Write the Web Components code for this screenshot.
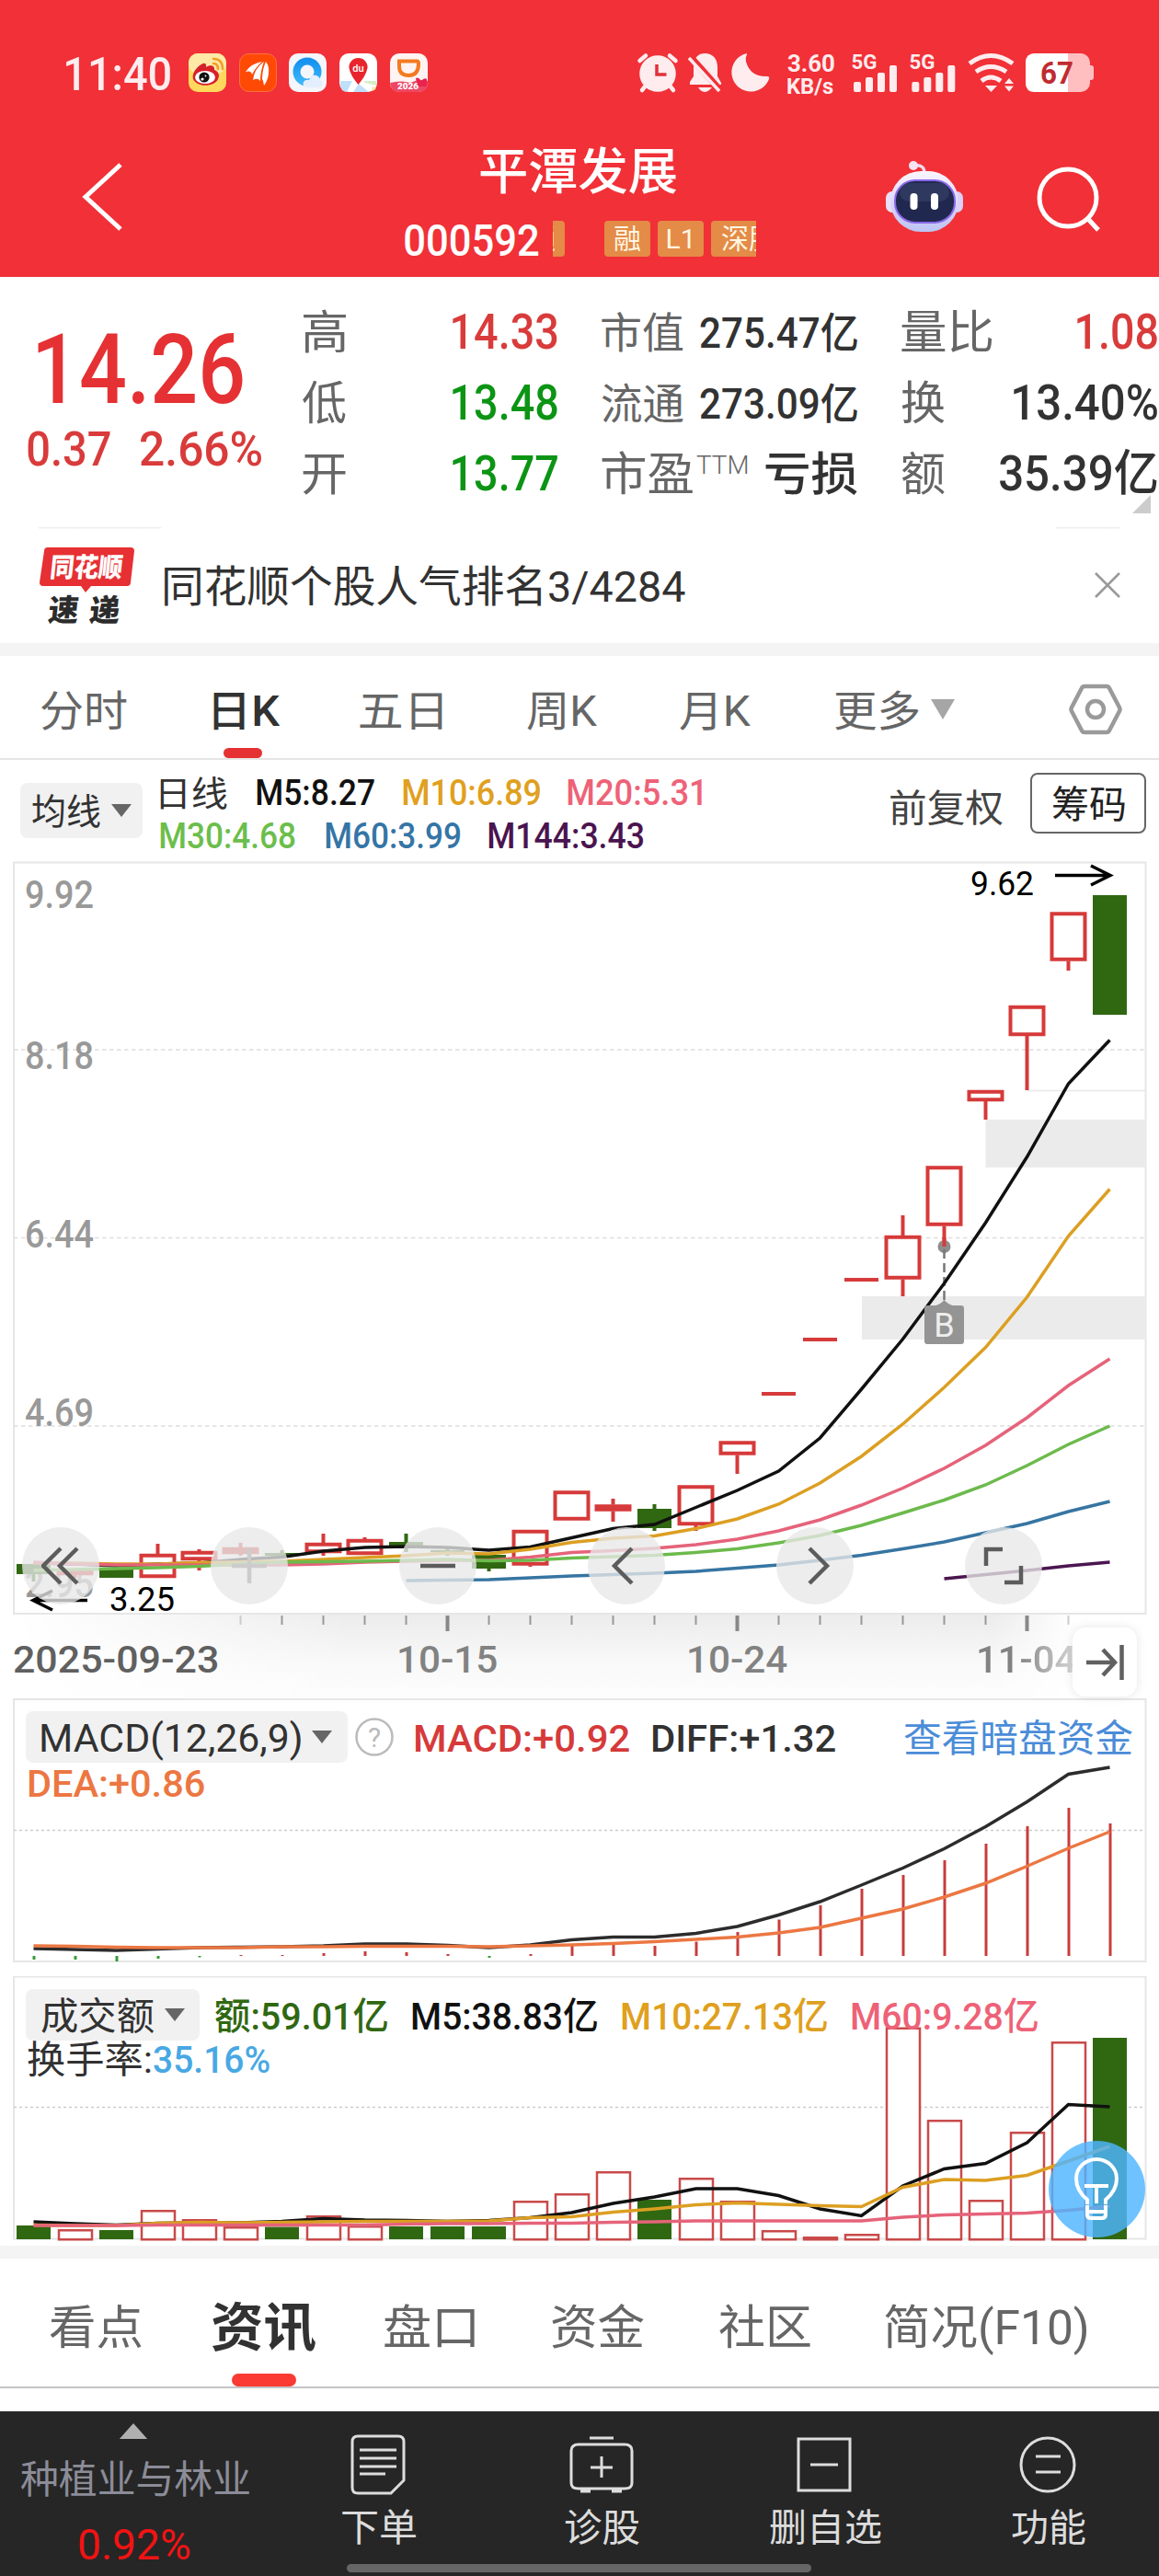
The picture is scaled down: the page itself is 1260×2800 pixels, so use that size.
<!DOCTYPE html>
<html lang="zh-CN">

<head>
    <meta charset="utf-8">
    <title>平潭发展 000592</title>
    <style>
        body {
            margin: 0;
            width: 1260px;
            height: 2800px;
            overflow: hidden;
            background: #fff;
            color: #323232;
            font-family: Roboto, "Noto Sans CJK SC", sans-serif;
        }
    </style>
</head>

<body>
    <status-bar></status-bar>
    <stock-header></stock-header>
    <quote-board></quote-board>
    <news-strip><fit-text size="47" w="566">同花顺个股人气排名3/4284</fit-text></news-strip>
    <period-tabs></period-tabs>
    <ma-legend></ma-legend>
    <price-chart></price-chart>
    <date-axis></date-axis>
    <macd-panel></macd-panel>
    <volume-panel></volume-panel>
    <info-tabs></info-tabs>
    <bottom-bar></bottom-bar>

    <script>
        const ruler = document.createElement('canvas').getContext('2d');

        // text squeezed or stretched so that its ink is exactly w pixels wide
        customElements.define('fit-text', class FitText extends HTMLElement {
            connectedCallback() {
                if (this.shadowRoot) return;
                const size = this.getAttribute('size') || 40;
                const w = Number(this.getAttribute('w'));
                const gap = this.getAttribute('gap') || 0;
                this.attachShadow({ mode: 'open' }).innerHTML = `
                    <style>
                        :host { display: block; flex: none; box-sizing: border-box; width: ${w}px; height: ${size}px;
                            font-size: ${size}px; line-height: ${size}px; white-space: nowrap; margin-left: ${gap}px; }
                        span { display: inline-block; transform-origin: 0 50%; }
                    </style>
                    <span><slot></slot></span>`;
                const cs = getComputedStyle(this);
                ruler.font = `${cs.fontWeight} ${size}px ${cs.fontFamily}`;
                const m = ruler.measureText(this.textContent);
                const k = w / (m.actualBoundingBoxRight + m.actualBoundingBoxLeft);
                this.shadowRoot.querySelector('span').style.transform =
                    `translate(${m.actualBoundingBoxLeft * k + 1}px, 1.5px) scaleX(${k})`;
            }
        });

        function define(name, html) {
            customElements.define(name, class extends HTMLElement {
                constructor() {
                    super();
                    this.attachShadow({ mode: 'open' }).innerHTML = html;
                }
            });
        }

        // grey dropdown chip
        define('drop-chip', `
            <style>
                :host { display: flex; align-items: center; flex: none; box-sizing: border-box; background: #f1f1f1;
                    border-radius: 8px; height: 56px; padding-left: 16px; }
                svg { margin-left: 13px; }
            </style>
            <slot></slot>
            <svg width="22" height="14"><path d="M0 0H22L11 14Z" fill="#666"/></svg>`);

        define('status-bar', `
            <style>
                :host { display: flex; align-items: center; height: 157px; box-sizing: border-box; background: #f13037; color: #ffecee; padding-left: 71px; }
                svg { flex: none; display: block; overflow: visible; }
                .app { margin-right: 13.7px; }
            </style>
            <fit-text size="50" w="113" style="font-weight:500">11:40</fit-text>
            <svg class="app" style="margin-left:21px" width="41" height="42" viewBox="0 0 41 42">
                <rect width="41" height="42" rx="10" fill="#ffd95e"/><rect y="0" width="41" height="22" rx="10" fill="#ffe9a6"/>
                <path d="M5 28C3 20 12 12 16 11C20 10 19 15 19 15C23 12 29 13 28 18C33 20 34 24 32 28C29 36 10 38 5 28Z" fill="#d8202a"/>
                <ellipse cx="18" cy="26" rx="11" ry="7" fill="#fff"/><circle cx="17" cy="26" r="5.6" fill="#111"/><circle cx="15" cy="28" r="1.6" fill="#fff"/><circle cx="18.500" cy="24.500" r=".9" fill="#fff"/>
                <path d="M27 6Q37 6 37 17M27 11Q32 11 32 17" fill="none" stroke="#f0a028" stroke-width="2.6" stroke-linecap="round"/>
            </svg>
            <svg class="app" width="41" height="42" viewBox="0 0 41 42">
                <rect x=".5" y=".5" width="40" height="41" rx="10" fill="#ff4a06" stroke="#ff7240"/>
                <path d="M7 20Q13 11 25 9Q18 15 14 23Q13 18 7 20ZM15 29Q16 17 27 9Q23 19 23 30Q20 26 15 29ZM29 9Q33 14 32 22Q31 30 27 35Q26 29 25 28Q25 18 29 9Z" fill="#fff"/>
            </svg>
            <svg class="app" width="41" height="42" viewBox="0 0 41 42">
                <defs><linearGradient id="q" x2="0" y2="1"><stop stop-color="#1692f0"/><stop offset="1" stop-color="#3bb5fa"/></linearGradient></defs>
                <rect width="41" height="42" rx="10" fill="#f4f6fb"/>
                <circle cx="20" cy="20" r="11.500" fill="none" stroke="url(#q)" stroke-width="8"/>
                <path d="M20 37Q14 36 16 31Q18 28 22 29Q24 23 30 24Q34 26 34 29Q38 31 36 35Q35 37 31 37Z" fill="#e3effc"/>
            </svg>
            <svg class="app" width="41" height="42" viewBox="0 0 41 42">
                <rect width="41" height="42" rx="10" fill="#fff"/>
                <path d="M1 30H14L8 42Q1 41 1 34Z" fill="#bfe0fb"/><path d="M26 30H40V35L28 32Z" fill="#d4efc4"/><path d="M15 42L21 33L32 42Z" fill="#bfe0fb"/><path d="M36 36L40 38Q38 41 35 41Z" fill="#ffe2a0"/>
                <path d="M20.500 5A10 10 0 0 1 30.500 16Q29 24 20.500 34Q12 24 10.500 16A10 10 0 0 1 20.500 5Z" fill="#e8242c"/>
                <text x="20.500" y="19.500" font-size="11" font-weight="500" fill="#fff" text-anchor="middle">du</text>
            </svg>
            <svg class="app" width="41" height="42" viewBox="0 0 41 42">
                <rect width="41" height="42" rx="10" fill="#fff4f2"/><path d="M0 32Q12 29 22 32Q32 27 41 30V34Q40 42 31 42H10Q1 42 0 32Z" fill="#ee4765"/>
                <path d="M10 8.500H29Q31 8.500 31 11Q31 24 20.500 24Q10 24 10 14Z" fill="none" stroke="#f47a1f" stroke-width="4"/>
                <path d="M28 27Q31 25 34 30Q37 26 40 28V36H30Z" fill="#e8234e"/>
                <text x="8" y="39" font-size="9.500" font-weight="900" fill="#fff" textLength="23" lengthAdjust="spacingAndGlyphs">2026</text>
            </svg>
            <svg style="margin-left:215px" width="145" height="42" viewBox="693 57 145 42">
                <g stroke="#ffecee" fill="none" stroke-width="4.500" stroke-linecap="round">
                    <circle cx="715" cy="79" r="17.500" fill="#ffecee"/><path d="M695.500 65L702 59.500M734.500 65L728 59.500M702 92L698 97M728 92L732 97"/>
                </g>
                <path d="M714 69V80H724.500" fill="none" stroke="#e0323b" stroke-width="3.500"/>
                <path d="M766 57C776 57 780 64 780 72V82L784 89V91H750V88L754 82V72C754 64 757 57 766 57ZM759 94H774Q770 99 766 99Q762 99 759 94Z" fill="#ffecee"/>
                <path d="M751 61L784 98" stroke="#f13037" stroke-width="7"/><path d="M749 62L782 98" stroke="#ffecee" stroke-width="3.500"/>
                <path d="M812 57A21 21 0 1 0 836 85Q837 82 834 82Q816 83 811 66Q810 62 812 58Z" fill="#ffecee"/>
            </svg>
            <div style="margin-left:17px"><fit-text size="26" w="51" style="font-weight:700">3.60</fit-text><fit-text size="24" w="50" style="font-weight:700">KB/s</fit-text></div>
            <svg style="margin-left:20px" width="264" height="42" viewBox="927 57 264 42">
                <g fill="#ffecee" font-size="22" font-weight="700">
                    <text x="926.500" y="74" textLength="28" lengthAdjust="spacingAndGlyphs">5G</text>
                    <path d="M931 88h4a2 2 0 0 1 2 2v7a2 2 0 0 1 -2 2h-4a2 2 0 0 1 -2 -2v-7a2 2 0 0 1 2 -2zM944 83h4a2 2 0 0 1 2 2v12a2 2 0 0 1 -2 2h-4a2 2 0 0 1 -2 -2v-12a2 2 0 0 1 2 -2zM957 78h4a2 2 0 0 1 2 2v17a2 2 0 0 1 -2 2h-4a2 2 0 0 1 -2 -2v-17a2 2 0 0 1 2 -2zM970 70h4a2 2 0 0 1 2 2v25a2 2 0 0 1 -2 2h-4a2 2 0 0 1 -2 -2v-25a2 2 0 0 1 2 -2z"/>
                    <text x="989.500" y="74" textLength="28" lengthAdjust="spacingAndGlyphs">5G</text>
                    <path transform="translate(63.300)" d="M931 88h4a2 2 0 0 1 2 2v7a2 2 0 0 1 -2 2h-4a2 2 0 0 1 -2 -2v-7a2 2 0 0 1 2 -2zM944 83h4a2 2 0 0 1 2 2v12a2 2 0 0 1 -2 2h-4a2 2 0 0 1 -2 -2v-12a2 2 0 0 1 2 -2zM957 78h4a2 2 0 0 1 2 2v17a2 2 0 0 1 -2 2h-4a2 2 0 0 1 -2 -2v-17a2 2 0 0 1 2 -2zM970 70h4a2 2 0 0 1 2 2v25a2 2 0 0 1 -2 2h-4a2 2 0 0 1 -2 -2v-25a2 2 0 0 1 2 -2z"/>
                    <path d="M1072 92H1085L1078.500 99ZM1093 90L1098 84L1103 90ZM1093 92.500L1098 98.500L1103 92.500Z"/>
                </g>
                <path d="M1055 68Q1078 51 1102 68M1062 77Q1078 66 1095 77M1068 87Q1078 79 1089 87" fill="none" stroke="#ffecee" stroke-width="5"/>
                <rect x="1116" y="57" width="70" height="42" rx="10" fill="#ffbfc1"/><rect x="1183" y="70" width="7" height="16" rx="3" fill="#ffbfc1"/>
                <path d="M1126 57H1162V99H1126Q1116 99 1116 89V67Q1116 57 1126 57Z" fill="#fff"/>
                <text x="1132" y="90" font-size="33" font-weight="700" fill="#bf2b31" textLength="36" lengthAdjust="spacingAndGlyphs">67</text>
            </svg>`);

        define('tag-badge', `
            <style>
                :host { display: block; flex: none; width: 50px; height: 39px; box-sizing: border-box; margin-right: 8px; border-radius: 4px; background: #e48b47;
                    color: #fff6e2; font-size: 30px; line-height: 39px; text-align: center; white-space: nowrap; }
            </style><slot></slot>`);

        define('stock-header', `
            <style>
                :host { display: flex; align-items: flex-start; height: 144px; background: #f13037; color: #fff; }
                svg { display: block; flex: none; }
                .mid { width: 382px; margin-left: 301px; }
                .code { display: flex; margin-top: 27px; height: 39px; align-items: center; }
                .tags { display: flex; width: 221px; height: 39px; overflow: hidden; margin-left: 17px; }
            </style>
            <svg style="margin:18px 0 0 88px" width="51" height="78"><path d="M43 4L5 39L43 74" fill="none" stroke="#fff" stroke-width="5"/></svg>
            <div class="mid">
                <fit-text size="54" w="214" style="font-weight:500;margin:2px 0 0 81px">平潭发展</fit-text>
                <div class="code">
                    <fit-text size="49" w="145" gap="-1" style="font-weight:500">000592</fit-text>
                    <div class="tags"><tag-badge style="margin-left:-37px;margin-right:43px">通</tag-badge><tag-badge>融</tag-badge><tag-badge>L1</tag-badge><tag-badge style="width:78px;text-align:left;text-indent:11px">深股通</tag-badge></div>
                </div>
            </div>
            <svg style="margin:17px 0 0 141px" width="84" height="80" viewBox="0 0 84 80">
                <defs><linearGradient id="h" x2="0" y2="1"><stop stop-color="#fbf6ff"/><stop offset=".6" stop-color="#d8d0f6"/><stop offset="1" stop-color="#bcc4f2"/></linearGradient></defs>
                <path d="M30 6Q43 4 42 16" fill="none" stroke="#efd9ee" stroke-width="3.500"/><circle cx="30" cy="6" r="5" fill="#f6e4f2"/>
                <rect x="0" y="34" width="14" height="23" rx="7" fill="#e9dff8"/><rect x="70" y="34" width="14" height="23" rx="7" fill="#dccff8"/>
                <rect x="5" y="12" width="74" height="66" rx="33" fill="url(#h)"/>
                <rect x="10" y="22" width="65" height="46" rx="22" fill="#202850" stroke="#8a68e8" stroke-width="2"/>
                <rect x="15" y="25" width="54" height="20" rx="10" fill="#3a4268" opacity=".6"/>
                <rect x="26.500" y="36" width="8" height="18" rx="4" fill="#fff"/><rect x="49" y="36" width="8" height="18" rx="4" fill="#fff"/>
            </svg>
            <svg style="margin:22px 0 0 78px" width="76" height="78"><circle cx="36" cy="36" r="31" fill="none" stroke="#fff" stroke-width="5"/><path d="M57 58L69 71" stroke="#fff" stroke-width="5"/></svg>`);

        define('quote-board', `
            <style>
                :host { display: grid; grid-template-columns: 299px 333px 326px 302px; height: 271px; position: relative; }
                .now { color: #e53133; }
                .now div { display: flex; }
                .col { padding-top: 20px; }
                .row { display: flex; align-items: center; height: 77px; justify-content: space-between; }
                .c1 { padding: 20px 27px 0 29px; } .c2 { padding-left: 21px; } .c3 { padding-left: 21px; }
                .c2 .row { padding-right: 27px; } .c3 .row { padding-right: 3px; }
                .k { color: #666; } .v { font-weight: 500; }
                .r { color: #d93b3b; } .g { color: #0c9414; }
                .corner { position: absolute; right: 9px; top: 237px; width: 0; height: 0; border: 10px solid transparent;
                    border-right-color: #ccc; border-bottom-color: #ccc; }
            </style>
            <div class="now">
                <fit-text size="105" w="223" style="font-weight:500;margin:47px 0 0 40px">14.26</fit-text>
                <div style="margin-top:8px"><fit-text class="r" size="52" w="90" gap="29" style="font-weight:500">0.37</fit-text><fit-text class="r" size="52" w="131" gap="33" style="font-weight:500">2.66%</fit-text></div>
            </div>
            <div class="col c1">
                <div class="row"><fit-text class="k" size="50" w="47">高</fit-text><fit-text class="v r" size="53" w="114">14.33</fit-text></div>
                <div class="row"><fit-text class="k" size="50" w="47">低</fit-text><fit-text class="v g" size="53" w="114">13.48</fit-text></div>
                <div class="row"><fit-text class="k" size="50" w="47">开</fit-text><fit-text class="v g" size="53" w="114">13.77</fit-text></div>
            </div>
            <div class="col c2">
                <div class="row"><fit-text class="k" size="46" w="89">市值</fit-text><fit-text class="v" size="46" w="171">275.47亿</fit-text></div>
                <div class="row"><fit-text class="k" size="46" w="89">流通</fit-text><fit-text class="v" size="46" w="171">273.09亿</fit-text></div>
                <div class="row"><fit-text class="k" size="50" w="99">市盈</fit-text><fit-text class="k" size="27" w="55" style="margin:-18px 16px 0 0;font-weight:300">TTM</fit-text><fit-text class="v" size="50" w="100">亏损</fit-text></div>
            </div>
            <div class="col c3">
                <div class="row"><fit-text class="k" size="50" w="99">量比</fit-text><fit-text class="v r" size="53" w="87">1.08</fit-text></div>
                <div class="row"><fit-text class="k" size="50" w="47">换</fit-text><fit-text class="v" size="53" w="156">13.40%</fit-text></div>
                <div class="row"><fit-text class="k" size="50" w="47">额</fit-text><fit-text class="v" size="53" w="171">35.39亿</fit-text></div>
            </div>
            <div class="corner"></div>`);

        define('news-strip', `
            <style>
                :host { display: flex; align-items: center; height: 141px; box-sizing: border-box; border-bottom: 14px solid #f4f4f4; color: #323232;
                    background: linear-gradient(#eee, #eee) 42px 1px / 133px 1.500px no-repeat, linear-gradient(#eee, #eee) 1148px 1px / 70px 1.500px no-repeat; }
                svg { flex: none; display: block; overflow: visible; }
                .x { margin-left: 446px; }
            </style>
            <svg style="margin:0 32px 0 43px" width="103" height="86" viewBox="0 0 103 86">
                <path d="M9 2H99Q103 2 103 6L99 40Q99 44 95 44H56L50 51L45 44H4Q0 44 0 40L5 6Q5 2 9 2Z" fill="#e63033"/>
                <g font-weight="900" transform="skewX(-6)">
                    <text x="14" y="34" font-size="29" fill="#fff" textLength="79" lengthAdjust="spacingAndGlyphs">同花顺</text>
                    <text x="17" y="82" font-size="33" fill="#2c2c2c" textLength="78">速递</text>
                </g>
            </svg>
            <slot></slot>
            <svg class="x" width="28" height="28"><path d="M1 1L27 27M27 1L1 27" stroke="#999" stroke-width="2.500"/></svg>`);

        define('period-tabs', `
            <style>
                :host { display: flex; align-items: center; height: 113px; box-sizing: border-box; border-bottom: 2px solid #e6e6e6; color: #666; position: relative; padding-top: 4px; }
                .on { color: #323232; font-weight: 500; }
                i { position: absolute; left: 243px; bottom: 0; width: 42px; height: 11px; border-radius: 6px; background: #e53133; }
                svg { display: block; flex: none; }
            </style>
            <fit-text size="46" w="93" gap="44">分时</fit-text>
            <fit-text size="46" w="73" gap="94" class="on">日K</fit-text>
            <fit-text size="46" w="90" gap="86">五日</fit-text>
            <fit-text size="46" w="76" gap="92">周K</fit-text>
            <fit-text size="46" w="77" gap="90">月K</fit-text>
            <fit-text size="46" w="91" gap="92">更多</fit-text>
            <svg style="margin-left:14px" width="26" height="22"><path d="M0 0H26L13 22Z" fill="#a6a6a6"/></svg>
            <svg style="margin-left:124px" width="58" height="56"><path d="M17 3H41Q43 3 44 5L55 26Q56 28 55 30L44 51Q43 53 41 53H17Q15 53 14 51L3 30Q2 28 3 26L14 5Q15 3 17 3Z" fill="none" stroke="#9a9a9a" stroke-width="4.500"/><circle cx="29" cy="28" r="9" fill="none" stroke="#9a9a9a" stroke-width="4.500"/></svg>
            <i></i>`);

        define('ma-legend', `
            <style>
                :host { display: flex; height: 110px; align-items: flex-start; }
                drop-chip { width: 133px; height: 60px; margin: 25px 0 0 22px; padding-left: 12px; }
                .lines { width: 812px; padding: 15px 0 0 18px; box-sizing: border-box; }
                .lines div { display: flex; height: 39px; align-items: center; margin-bottom: 8px; }
                .m { font-weight: 500; }
                button { font: inherit; box-sizing: border-box; width: 126px; height: 66px; margin: 14px 0 0 31px; padding: 0 0 0 21px;
                    border: 2px solid #666; border-radius: 8px; background: #fff; color: #222; }
            </style>
            <drop-chip><fit-text size="39" w="74">均线</fit-text></drop-chip>
            <div class="lines">
                <div><fit-text size="38" w="73">日线</fit-text><fit-text class="m" size="39" w="128" gap="32" style="color:#111">M5:8.27</fit-text><fit-text class="m" size="39" w="149" gap="31" style="color:#e0a020">M10:6.89</fit-text><fit-text class="m" size="39" w="146" gap="30" style="color:#ee6277">M20:5.31</fit-text></div>
                <div><fit-text class="m" size="39" w="147" style="color:#6cbe4c">M30:4.68</fit-text><fit-text class="m" size="39" w="146" gap="33" style="color:#3575a6">M60:3.99</fit-text><fit-text class="m" size="39" w="168" gap="31" style="color:#4a1450">M144:3.43</fit-text></div>
            </div>
            <fit-text size="41" w="122" style="color:#444;margin-top:31px">前复权</fit-text>
            <button><fit-text size="41" w="79">筹码</fit-text></button>`);

        // columns are 45px apart in all three charts
        const cx = i => 36.5 + 45 * i;
        const line = (ys, color, from = 0, width = 3.5) =>
            `<polyline points="${ys.map((y, i) => cx(i + from) + ',' + y).join(' ')}" fill="none" stroke="${color}" stroke-width="${width}"/>`;
        const RED = '#d63a3a', GREEN = '#306812';

        // kind, body top, body bottom, wick top, wick bottom
        const candles = [
            ['g', 1700, 1711, 1700, 1719], ['r', 1707, 1712, 1707, 1715], ['g', 1706, 1715, 1706, 1715], ['r', 1689, 1715, 1678, 1715],
            ['r', 1686, 1696, 1684, 1707], ['r', 1682, 1689, 1677, 1691], ['g', 1688, 1691, 1685, 1691], ['r', 1677, 1688, 1667, 1691],
            ['r', 1673, 1690, 1671, 1690], ['g', 1676, 1680, 1667, 1687], ['g', 1685, 1687, 1681, 1691], ['g', 1690, 1705, 1690, 1708],
            ['r', 1663, 1701.5, 1663, 1703], ['r', 1620.5, 1652.5, 1621, 1652], ['r', 1635.5, 1642.5, 1629, 1654], ['g', 1640, 1661, 1635, 1664],
            ['r', 1614.500, 1658, 1615, 1664], ['r', 1566.500, 1581.500, 1567, 1602], ['r', 1513, 1517, 1513, 1517], ['r', 1454, 1458, 1454, 1458],
            ['r', 1389, 1393, 1389, 1393], ['r', 1343, 1390.500, 1321, 1409], ['r', 1267.500, 1332.500, 1268, 1355], ['r', 1185, 1197, 1185, 1217],
            ['r', 1093, 1126, 1093, 1185], ['r', 991.500, 1044.500, 992, 1055], ['g', 973, 1103, 973, 1103]];

        const drawCandle = ([kind, top, bottom, hi, lo], i) => {
            const x = cx(i), color = kind == 'g' ? GREEN : RED;
            let s = '';
            if (hi < top) s += `<path d="M${x} ${hi}V${top}" stroke="${color}" stroke-width="4"/>`;
            if (lo > bottom) s += `<path d="M${x} ${bottom}V${lo}" stroke="${color}" stroke-width="4"/>`;
            if (kind == 'g' || bottom - top < 5)
                return s + `<rect x="${x - 18.5}" y="${top}" width="37" height="${bottom - top}" fill="${color}"/>`;
            return s + `<rect x="${x - 18}" y="${top + 1.75}" width="36" height="${bottom - top - 3.5}" fill="${bottom - top < 8 ? RED : '#fff'}" stroke="${color}" stroke-width="4"/>`;
        };

        const yLabels = [['9.92', 971.5], ['8.18', 1147], ['6.44', 1341], ['4.69', 1535], ['2.95', 1721]];

        // round translucent button, icon in the slot
        define('round-button', `
            <style>
                :host { display: flex; align-items: center; justify-content: center; width: 84px; height: 84px; border-radius: 50%; background: rgba(232, 232, 232, .78); }
            </style><slot></slot>`);

        define('price-chart', `
            <style>
                :host { display: grid; height: 819px; }
                :host > * { grid-area: 1 / 1; }
                svg { display: block; }
                .tools { display: flex; gap: 121px; align-self: end; padding: 0 0 11px 24px; }
                .tools svg { fill: none; stroke: #5c5c5c; stroke-width: 4.500; }
            </style>
            <svg width="1260" height="819" viewBox="0 936 1260 819">
                <rect x="15" y="937.500" width="1230.500" height="816.500" fill="none" stroke="#e6e6e6" stroke-width="2"/>
                <path d="M1071.500 1217H1246V1269H1071.500ZM937 1409H1246V1456H937Z" fill="#ebebeb"/>
                <path d="M1117 1185.500H1246" stroke="#e8e8e8" stroke-width="1.500"/>
                <path d="M15 1141H1245M15 1345.500H1245M15 1550H1245" stroke="#ddd" stroke-width="1.300" stroke-dasharray="4.500 3.500"/>
                ${yLabels.map(([t, y]) => `<text x="27" y="${y + 15}" font-size="42" font-weight="500" fill="#999" textLength="75" lengthAdjust="spacingAndGlyphs">${t}</text>`).join('')}
                ${candles.map(drawCandle).join('')}
                <circle cx="1026.500" cy="1355" r="7" fill="#8d8d8d"/><path d="M1026.500 1345V1355" stroke="#d63a3a" stroke-width="4"/>
                <path d="M1026.500 1358V1413" stroke="#777" stroke-width="2.500" stroke-dasharray="10 5"/>
                ${line([1699, 1700, 1702, 1700, 1699, 1695, 1692.500, 1686, 1682, 1681, 1682, 1685, 1681.500, 1671.500, 1661.500, 1657, 1638.500, 1620, 1599, 1563, 1510, 1455.500, 1395, 1329, 1257.500, 1178, 1130.500], '#111')}
                ${line([1699, 1699, 1700, 1700, 1698.500, 1698, 1697, 1695, 1693, 1691, 1688, 1689, 1684, 1676.500, 1672, 1669.500, 1661.500, 1651, 1635, 1612, 1583, 1548, 1508, 1464.500, 1410, 1343.500, 1292.500], '#dc9f22')}
                ${line([1698, 1700, 1701, 1701, 1701, 1701, 1701, 1700, 1698, 1697, 1696, 1696, 1692.500, 1687.500, 1685.500, 1683, 1679, 1673, 1664, 1652, 1636, 1617.500, 1596, 1571, 1541, 1506, 1477], '#e5637a')}
                ${line([1707, 1706, 1705, 1704, 1702.500, 1700, 1698, 1697.500, 1697, 1696, 1695, 1696.500, 1696, 1693.500, 1692, 1690.500, 1687.500, 1683.500, 1677, 1669, 1658, 1644.500, 1630.500, 1614, 1593, 1570, 1550], '#6cba4c')}
                ${line([1718, 1717.500, 1717, 1715, 1713, 1711.500, 1710, 1708, 1704.500, 1701, 1696, 1690.500, 1683.500, 1676, 1666, 1656, 1643, 1632], '#3775a2', 9)}
                ${line([1716, 1711.500, 1707, 1702, 1698], '#4b1650', 22)}
                <path d="M1005 1422Q1005 1419 1008 1419H1017Q1022 1418 1026.500 1413Q1031 1418 1036 1419H1045Q1048 1419 1048 1422V1458Q1048 1461 1045 1461H1008Q1005 1461 1005 1458Z" fill="#949494"/>
                <text x="1026.500" y="1453" font-size="36" fill="#eee" text-anchor="middle">B</text>
                <g fill="none" stroke="#000" stroke-width="3.500"><path d="M1147 951.500H1206M1186 941L1207 951.500L1186 962"/><path d="M95 1739.500H37M57 1729L36 1739.500L57 1750"/></g>
                <text x="1055" y="973" font-size="37" fill="#000" textLength="69" lengthAdjust="spacingAndGlyphs">9.62</text>
                <text x="119" y="1751" font-size="36" fill="#000" textLength="71" lengthAdjust="spacingAndGlyphs">3.25</text>
            </svg>
            <div class="tools">
                <round-button><svg width="42" height="42"><path d="M21 2L2 21L21 40M39 2L20 21L39 40"/></svg></round-button>
                <round-button><svg width="40" height="42" style="stroke:#ccc"><path d="M1 21H39M20 2V40"/></svg></round-button>
                <round-button><svg width="40" height="42"><path d="M1 21H39"/></svg></round-button>
                <round-button><svg width="42" height="42"><path d="M27 2L8 21L27 40"/></svg></round-button>
                <round-button><svg width="42" height="42"><path d="M15 2L34 21L15 40"/></svg></round-button>
                <round-button><svg width="44" height="46"><path d="M3 23V5H21M41 23V41H23"/></svg></round-button>
            </div>`);

        const ticks = [];
        for (let i = 5; i < 26; i++) {
            const major = (i - 10) % 7 == 0;
            const faint = i == 5 || i == 25;
            ticks.push(`<path d="M${cx(i)} 1V${major ? 18 : 11}" stroke="${major ? '#888' : faint ? '#ccc' : '#999'}" stroke-width="${major ? 4 : 2}"/>`);
        }

        define('date-axis', `
            <style>
                :host { display: grid; height: 91px; }
                :host > * { grid-area: 1 / 1; }
                .shade { background: linear-gradient(#ececec, #f9f9f9 60%, #fdfdfd);
                    -webkit-mask: linear-gradient(90deg, transparent 16px, #000 380px, #000 1080px, transparent 1170px); }
                svg, .dates { position: relative; }
                .dates { display: flex; padding: 27px 0 0 14px; color: #828282; font-weight: 500; }
                .dates > :first-child { color: #606060; }
                .fade { -webkit-mask: linear-gradient(90deg, #000 40%, rgba(0, 0, 0, .3)); }
                .last { justify-self: start; margin: 14px 0 0 1166px; display: flex; align-items: center; justify-content: center; width: 70px; height: 75px;
                    border-radius: 14px; background: #fff; box-shadow: 0 0 12px rgba(0, 0, 0, .1); z-index: 1; }
            </style>
            <div class="shade"></div>
            <svg width="1260" height="91">${ticks.join('')}</svg>
            <div class="dates">
                <fit-text size="41" w="222">2025-09-23</fit-text><fit-text size="41" w="106" gap="197">10-15</fit-text><fit-text size="41" w="107" gap="209">10-24</fit-text><fit-text size="41" w="106" gap="208" class="fade">11-04</fit-text>
            </div>
            <div class="last"><svg width="44" height="40" fill="none" stroke="#606060" stroke-width="4.500"><path d="M2 20H32M20 6L33 20L20 34M40.500 1V39"/></svg></div>`);

        const macdBars = [2130, 2130, 2132, 2129, 2127.5, 2125, 2125, 2123, 2121, 2122, 2124, 2128, 2124, 2115, 2114, 2115, 2110.5, 2100, 2086.5, 2071, 2053, 2038, 2022, 2004, 1985, 1965, 1982];
        const panelStyle = `
            :host { display: grid; }
            :host > * { grid-area: 1 / 1; }
            .head { display: flex; align-items: center; height: 56px; padding: 14px 0 0 28px; }
            .head > fit-text, .sub > .m { font-weight: 500; }
            .sub { display: flex; padding: 71px 0 0 30px; }`;

        define('macd-panel', `
            <style>${panelStyle} :host { height: 302px; } .help { margin-left: 8px; } .head > .link { font-weight: 400; }</style>
            <svg width="1260" height="287" viewBox="0 1846 1260 287">
                <rect x="15" y="1847" width="1230.500" height="285" fill="none" stroke="#e6e6e6" stroke-width="2"/>
                <path d="M15 1989.500H1245" stroke="#ccc" stroke-width="1.300" stroke-dasharray="3 3"/>
                ${line([2118, 2119, 2120, 2118.500, 2117, 2116.500, 2116, 2115, 2113, 2113, 2114.500, 2117, 2114, 2108.500, 2105.500, 2105.500, 2101.500, 2094, 2081.500, 2067, 2049, 2030.500, 2009.500, 1985.500, 1958.500, 1928.500, 1921], '#2c2c2c')}
                ${macdBars.map((y, i) => `<path d="M${cx(i) + .5} 2126V${y}" stroke="${y > 2126 ? '#3a9a3a' : '#c83c3c'}" stroke-width="3"/>`).join('')}
                ${line([2115, 2115.500, 2116.500, 2117, 2117, 2117, 2116, 2116, 2115.500, 2115.500, 2115.500, 2116, 2115, 2114, 2112.500, 2110.500, 2108, 2105.500, 2101, 2095, 2085, 2075, 2062, 2047, 2028.500, 2009, 1991], '#ec7742')}
            </svg>
            <div class="head">
                <drop-chip style="width:350px"><fit-text size="42" w="282">MACD(12,26,9)</fit-text></drop-chip>
                <svg class="help" width="42" height="42"><circle cx="21" cy="21" r="19.500" fill="none" stroke="#bbb" stroke-width="2.500"/><text x="21" y="31.500" font-size="30" fill="#bbb" text-anchor="middle">?</text></svg>
                <fit-text size="41" w="233" gap="22" style="color:#d63a3a">MACD:+0.92</fit-text>
                <fit-text size="41" w="199" gap="25">DIFF:+1.32</fit-text>
                <fit-text size="41" w="248" gap="75" class="link" style="color:#4a8cd8">查看暗盘资金</fit-text>
            </div>
            <div class="sub"><fit-text class="m" size="41" w="191" style="color:#ec7742">DEA:+0.86</fit-text></div>`);

        const volumes = [['g', 2419], ['r', 2423], ['g', 2424], ['r', 2402], ['r', 2412], ['r', 2420], ['g', 2420.5], ['r', 2408], ['r', 2419],
            ['g', 2420], ['g', 2420], ['g', 2420], ['r', 2392], ['r', 2384], ['r', 2360], ['g', 2391], ['r', 2367], ['r', 2392], ['r', 2424],
            ['r', 2431], ['r', 2428], ['r', 2203.5], ['r', 2304], ['r', 2391], ['r', 2317], ['r', 2219], ['g', 2215]];

        define('volume-panel', `
            <style>
                ${panelStyle}
                :host { height: 293px; }
                .sub { padding-top: 69px; }
                .bulb { justify-self: start; display: flex; align-items: center; justify-content: center; width: 105px; height: 105px; margin: 179px 0 0 1139.500px;
                    border-radius: 50%; background: rgba(78, 181, 255, .82); }
            </style>
            <svg width="1260" height="288" viewBox="0 2148 1260 288">
                <rect x="15" y="2148.500" width="1230.500" height="285" fill="none" stroke="#e6e6e6" stroke-width="2"/>
                <path d="M15 2290.500H1245" stroke="#ccc" stroke-width="1.300" stroke-dasharray="3 3"/>
                ${volumes.map(([k, y], i) => k == 'g' ? `<rect x="${cx(i) - 18.5}" y="${y}" width="37" height="${2434 - y}" fill="${GREEN}"/>`
                    : `<rect x="${cx(i) - 17.5}" y="${y + 1.25}" width="36" height="${2433 - y}" fill="#fff" stroke="#c94a4a" stroke-width="2.500"/>`).join('')}
                ${line([2415, 2417, 2418.500, 2416.500, 2416, 2416, 2414.500, 2411.500, 2413, 2413.500, 2414.500, 2413.500, 2410.500, 2405, 2395, 2388, 2379, 2379, 2386.500, 2401, 2408.500, 2376, 2357.500, 2351.500, 2329, 2287.500, 2290], '#111', 0, 3.5)}
                ${line([2418.500, 2419, 2419, 2416.500, 2415.500, 2416, 2415.500, 2415, 2414.500, 2414.500, 2414.500, 2414, 2410.500, 2409.500, 2404.500, 2401, 2396.500, 2394.500, 2396, 2397.500, 2398.500, 2377.500, 2369, 2370, 2364.500, 2349, 2333], '#dc9f22', 0, 3.5)}
                ${line([2419, 2419, 2419, 2418.500, 2418.500, 2418.500, 2418.500, 2418.500, 2418.500, 2417.500, 2417, 2417, 2416.500, 2416.500, 2415.500, 2415, 2414, 2414, 2414, 2414, 2414, 2410, 2407.500, 2406.500, 2405.500, 2402.500, 2398], '#e5637a', 0, 3.5)}
            </svg>
            <div class="head">
                <drop-chip style="width:189px"><fit-text size="41" w="122">成交额</fit-text></drop-chip>
                <fit-text size="41" w="187" gap="16" style="color:#306812">额:59.01亿</fit-text>
                <fit-text size="41" w="201" gap="27" style="color:#111">M5:38.83亿</fit-text>
                <fit-text size="41" w="223" gap="27" style="color:#dfa01e">M10:27.13亿</fit-text>
                <fit-text size="41" w="202" gap="27" style="color:#ee6277">M60:9.28亿</fit-text>
            </div>
            <div class="sub"><fit-text size="41" w="134" gap="-1">换手率:</fit-text><fit-text class="m" size="41" w="126" gap="3" style="color:#48a8e4">35.16%</fit-text></div>
            <div class="bulb"><svg width="50" height="70" fill="none" stroke="#fff" stroke-width="4"><path d="M15 51V46Q3 36 3 23A22 21 0 0 1 47 23Q47 36 35 46V51M12 31H38M25 31V50M15 52V62Q15 66 19 66H31Q35 66 35 62V52M15 59H35"/></svg></div>`);

        define('info-tabs', `
            <style>
                :host { display: flex; align-items: center; position: relative; height: 155px; box-sizing: border-box; border-top: 14px solid #f4f4f4;
                    border-bottom: 2px solid #c4c4c4; color: #666; padding-top: 7px; }
                .on { color: #323232; font-weight: 700; }
                i { position: absolute; left: 252px; bottom: 0; width: 70px; height: 14px; border-radius: 7px; background: #fb3b33; }
            </style>
            <fit-text size="51" w="100" gap="53">看点</fit-text>
            <fit-text size="57" w="113" gap="76" class="on">资讯</fit-text>
            <fit-text size="51" w="98" gap="75">盘口</fit-text>
            <fit-text size="51" w="100" gap="84">资金</fit-text>
            <fit-text size="51" w="99" gap="82">社区</fit-text>
            <fit-text size="51" w="220" gap="81">简况(F10)</fit-text>
            <i></i>`);

        // icon above a label
        define('nav-item', `
            <style>
                :host { display: flex; flex-direction: column; align-items: center; width: 242px; color: #dcdcdc; padding-top: 24px; box-sizing: border-box; }
                div { height: 68px; display: flex; align-items: center; margin-bottom: 13px; }
            </style>
            <div><slot name="icon"></slot></div><slot></slot>`);

        define('bottom-bar', `
            <style>
                :host { display: grid; grid-template-columns: 290px repeat(4, 242.500px); grid-template-rows: 166px 9px; height: 179px; margin-top: 25px; background: #262626; overflow: hidden; }
                svg { display: block; fill: none; stroke: #ddd; stroke-width: 3; }
                .sector { display: flex; flex-direction: column; align-items: center; color: #8c8c98; padding-top: 13px; }
                .home { grid-column: 1 / -1; width: 505px; height: 9px; border-radius: 5px; background: #666; margin-left: 377px; }
            </style>
            <div class="sector">
                <svg width="32" height="18"><path d="M0 18L16 0L32 18Z" fill="#b0b0b0" stroke="none"/></svg>
                <fit-text size="42" w="249" style="margin-top:22px">种植业与林业</fit-text>
                <fit-text size="46" w="120" style="margin-top:26px;color:#f31313">0.92%</fit-text>
            </div>
            <nav-item><svg slot="icon" width="60" height="66"><path d="M8 2H52Q58 2 58 8V50L44 64H8Q2 64 2 58V8Q2 2 8 2ZM10 17H50M10 26H50M10 35H50M10 43H38"/></svg><fit-text size="41" w="80">下单</fit-text></nav-item>
            <nav-item><svg slot="icon" width="70" height="66"><path d="M10 11H60Q68 11 68 18V53Q68 59 60 59H10Q2 59 2 53V18Q2 11 10 11ZM22 4H48M35 24V47M23 36H47M12 62H23M46 62H57"/></svg><fit-text size="41" w="81">诊股</fit-text></nav-item>
            <nav-item><svg slot="icon" width="60" height="60"><path d="M2 2H58V58H2ZM15 30H45"/></svg><fit-text size="41" w="121">删自选</fit-text></nav-item>
            <nav-item><svg slot="icon" width="62" height="62"><circle cx="31" cy="31" r="29"/><path d="M18 22H45M18 39H45"/></svg><fit-text size="41" w="80">功能</fit-text></nav-item>
            <div class="home"></div>`);
    </script>
</body>

</html>
